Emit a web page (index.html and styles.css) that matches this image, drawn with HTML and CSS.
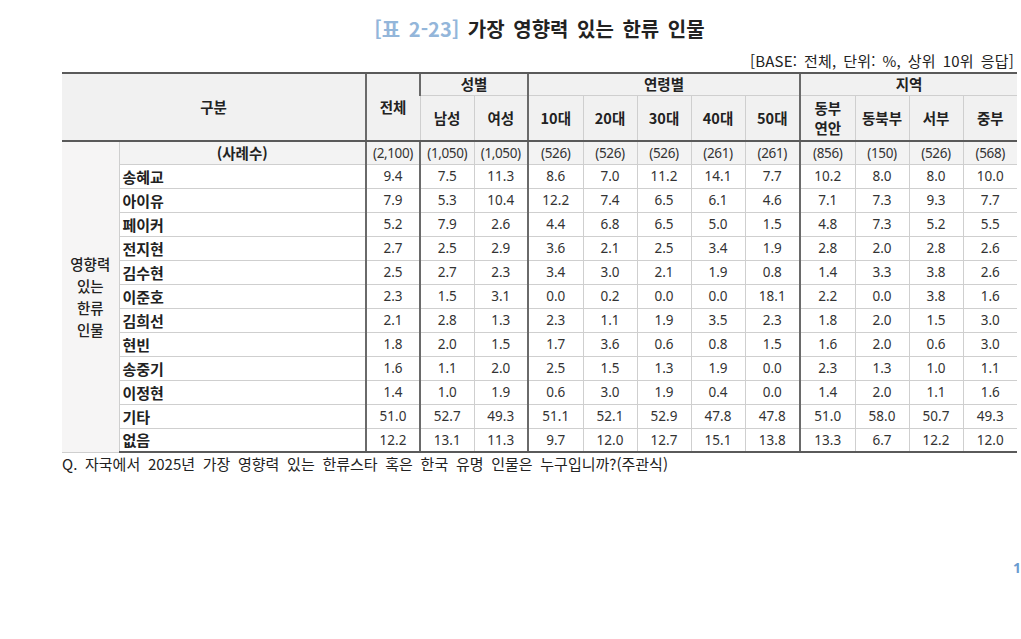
FILE: index.html
```html
<!DOCTYPE html>
<html lang="ko">
<head>
<meta charset="utf-8">
<title>가장 영향력 있는 한류 인물</title>
<link rel="stylesheet" href="styles.css">
</head>
<body>
<div class="page">
  <h1 class="title"><span class="tag">[표 2-23]</span> 가장 영향력 있는 한류 인물</h1>
  <div class="base">[BASE: 전체, 단위: %, 상위 10위 응답]</div>
  <table class="tbl">
    <colgroup>
      <col class="c-grp"><col class="c-name"><col class="c-n"><col class="c-n"><col class="c-n">
      <col class="c-w"><col class="c-n"><col class="c-n"><col class="c-n"><col class="c-w">
      <col class="c-w"><col class="c-n"><col class="c-n"><col class="c-n">
    </colgroup>
    <thead>
      <tr class="h1">
        <th colspan="2" rowspan="2" class="hd">구분</th>
        <th rowspan="2" class="hd sep">전체</th>
        <th colspan="2" class="hd sep">성별</th>
        <th colspan="5" class="hd sep">연령별</th>
        <th colspan="4" class="hd sep">지역</th>
      </tr>
      <tr class="h2">
        <th class="hd sep">남성</th><th class="hd">여성</th>
        <th class="hd sep">10대</th><th class="hd">20대</th><th class="hd">30대</th><th class="hd">40대</th><th class="hd">50대</th>
        <th class="hd sep two">동부<br>연안</th><th class="hd">동북부</th><th class="hd">서부</th><th class="hd">중부</th>
      </tr>
    </thead>
    <tbody>
      <tr class="cnt">
        <th rowspan="13" class="grp">영향력<br>있는<br>한류<br>인물</th>
        <th class="cname">(사례수)</th>
        <td class="sep">(2,100)</td><td class="sep">(1,050)</td><td>(1,050)</td>
        <td class="sep">(526)</td><td>(526)</td><td>(526)</td><td>(261)</td><td>(261)</td>
        <td class="sep">(856)</td><td>(150)</td><td>(526)</td><td>(568)</td>
      </tr>
      <tr><th class="name">송혜교</th><td class="sep">9.4</td><td class="sep">7.5</td><td>11.3</td><td class="sep">8.6</td><td>7.0</td><td>11.2</td><td>14.1</td><td>7.7</td><td class="sep">10.2</td><td>8.0</td><td>8.0</td><td>10.0</td></tr>
      <tr><th class="name">아이유</th><td class="sep">7.9</td><td class="sep">5.3</td><td>10.4</td><td class="sep">12.2</td><td>7.4</td><td>6.5</td><td>6.1</td><td>4.6</td><td class="sep">7.1</td><td>7.3</td><td>9.3</td><td>7.7</td></tr>
      <tr><th class="name">페이커</th><td class="sep">5.2</td><td class="sep">7.9</td><td>2.6</td><td class="sep">4.4</td><td>6.8</td><td>6.5</td><td>5.0</td><td>1.5</td><td class="sep">4.8</td><td>7.3</td><td>5.2</td><td>5.5</td></tr>
      <tr><th class="name">전지현</th><td class="sep">2.7</td><td class="sep">2.5</td><td>2.9</td><td class="sep">3.6</td><td>2.1</td><td>2.5</td><td>3.4</td><td>1.9</td><td class="sep">2.8</td><td>2.0</td><td>2.8</td><td>2.6</td></tr>
      <tr><th class="name">김수현</th><td class="sep">2.5</td><td class="sep">2.7</td><td>2.3</td><td class="sep">3.4</td><td>3.0</td><td>2.1</td><td>1.9</td><td>0.8</td><td class="sep">1.4</td><td>3.3</td><td>3.8</td><td>2.6</td></tr>
      <tr><th class="name">이준호</th><td class="sep">2.3</td><td class="sep">1.5</td><td>3.1</td><td class="sep">0.0</td><td>0.2</td><td>0.0</td><td>0.0</td><td>18.1</td><td class="sep">2.2</td><td>0.0</td><td>3.8</td><td>1.6</td></tr>
      <tr><th class="name">김희선</th><td class="sep">2.1</td><td class="sep">2.8</td><td>1.3</td><td class="sep">2.3</td><td>1.1</td><td>1.9</td><td>3.5</td><td>2.3</td><td class="sep">1.8</td><td>2.0</td><td>1.5</td><td>3.0</td></tr>
      <tr><th class="name">현빈</th><td class="sep">1.8</td><td class="sep">2.0</td><td>1.5</td><td class="sep">1.7</td><td>3.6</td><td>0.6</td><td>0.8</td><td>1.5</td><td class="sep">1.6</td><td>2.0</td><td>0.6</td><td>3.0</td></tr>
      <tr><th class="name">송중기</th><td class="sep">1.6</td><td class="sep">1.1</td><td>2.0</td><td class="sep">2.5</td><td>1.5</td><td>1.3</td><td>1.9</td><td>0.0</td><td class="sep">2.3</td><td>1.3</td><td>1.0</td><td>1.1</td></tr>
      <tr><th class="name">이정현</th><td class="sep">1.4</td><td class="sep">1.0</td><td>1.9</td><td class="sep">0.6</td><td>3.0</td><td>1.9</td><td>0.4</td><td>0.0</td><td class="sep">1.4</td><td>2.0</td><td>1.1</td><td>1.6</td></tr>
      <tr><th class="name">기타</th><td class="sep">51.0</td><td class="sep">52.7</td><td>49.3</td><td class="sep">51.1</td><td>52.1</td><td>52.9</td><td>47.8</td><td>47.8</td><td class="sep">51.0</td><td>58.0</td><td>50.7</td><td>49.3</td></tr>
      <tr><th class="name">없음</th><td class="sep">12.2</td><td class="sep">13.1</td><td>11.3</td><td class="sep">9.7</td><td>12.0</td><td>12.7</td><td>15.1</td><td>13.8</td><td class="sep">13.3</td><td>6.7</td><td>12.2</td><td>12.0</td></tr>
    </tbody>
  </table>
  <p class="note">Q. 자국에서 2025년 가장 영향력 있는 한류스타 혹은 한국 유명 인물은 누구입니까?(주관식)</p>
  <div class="pagenum">1</div>
</div>
</body>
</html>
```
FILE: styles.css
```css
html, body {
  margin: 0;
  padding: 0;
  background: #ffffff;
}
body {
  font-family: "Noto Sans CJK KR", "Noto Sans", sans-serif;
  color: #222;
  overflow: hidden;
}
.page {
  width: 955px;
  padding: 16px 0 0 62px;
}
.title {
  margin: 0;
  font-size: 20px;
  line-height: 26px;
  font-weight: 700;
  text-align: center;
  color: #222;
  letter-spacing: 0px;
  word-spacing: 3px;
}
.tag {
  color: #93b6da;
}
.base {
  margin-top: 10px;
  text-align: right;
  font-size: 15px;
  line-height: 18px;
  padding-right: 3px;
  color: #222;
  letter-spacing: 0.2px;
  word-spacing: 2.5px;
}
.tbl {
  margin-top: 2px;
  width: 955px;
  border-collapse: collapse;
  table-layout: fixed;
  font-family: "Noto Sans", "Noto Sans CJK KR", sans-serif;
}
.c-grp { width: 57px; }
.c-name { width: 247px; }
.c-n { width: 54px; }
.c-w { width: 55px; }
.tbl th, .tbl td {
  border: 1px solid #cfcfcf;
  padding: 0;
  text-align: center;
  vertical-align: middle;
}
.tbl thead tr.h1 th { border-top: 2px solid #5a5a5a; }
.tbl thead tr.h2 th { border-bottom: 2px solid #5a5a5a; }
.tbl thead th[rowspan] { border-bottom: 2px solid #5a5a5a; }
.tbl tr.h1 { height: 22px; }
.tbl tr.h2 { height: 46px; }
.hd {
  background: #f1f1f1;
  font-family: "Noto Sans CJK KR", sans-serif;
  font-size: 14.5px;
  font-weight: 700;
  color: #222;
  line-height: 18px;
}
.hd.two { line-height: 20px; }
.tbl th:first-child, .tbl td:first-child { border-left: none; }
.tbl tr > :last-child { border-right: none; }
.tbl .sep { border-left: 2px solid #6a6a6a; }
.tbl tbody tr { height: 24px; }
.tbl tbody tr.cnt { height: 23px; }
.tbl tbody tr:last-child th, .tbl tbody tr:last-child td { border-bottom: 2px solid #5a5a5a; }
.grp {
  background: #f6f5f5;
  border-right: 2px solid #6a6a6a;
  border-bottom: 2px solid #5a5a5a;
  font-family: "Noto Sans CJK KR", sans-serif;
  font-size: 14.5px;
  font-weight: 500;
  line-height: 22px;
  color: #222;
}
.cname {
  background: #f3f3f3;
  font-family: "Noto Sans CJK KR", sans-serif;
  font-size: 14.5px;
  font-weight: 700;
  color: #222;
}
.cnt td {
  background: #f3f3f3;
  font-size: 13px;
  color: #333;
  letter-spacing: -0.4px;
}
.name {
  text-align: left !important;
  padding-left: 3px !important;
  font-family: "Noto Sans CJK KR", sans-serif;
  font-size: 15px;
  font-weight: 700;
  color: #222;
  background: #fff;
}
.tbl tbody td {
  font-size: 13.5px;
  color: #333;
  line-height: 16px;
}
.note {
  margin: 2px 0 0 0;
  font-size: 15px;
  line-height: 18px;
  color: #222;
  word-spacing: 3.5px;
}
.pagenum {
  margin-top: 86px;
  padding-left: 951px;
  width: 20px;
  font-family: "Noto Sans", sans-serif;
  font-size: 14px;
  font-weight: 700;
  color: #6a9bd0;
  line-height: 18px;
}
```
